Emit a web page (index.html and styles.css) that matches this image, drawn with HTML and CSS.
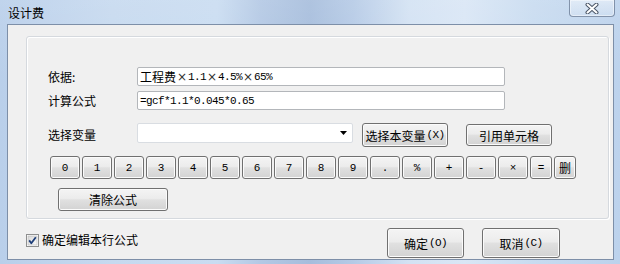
FILE: index.html
```html
<!DOCTYPE html>
<html>
<head>
<meta charset="utf-8">
<link rel="stylesheet" href="styles.css">
</head>
<body>
<div class="window">
  <div class="titlebar">
    <span class="title">设计费</span>
    <span class="close">
      <svg width="14" height="11" viewBox="0 0 14 11">
        <path d="M2.5 1.5 L11.5 9.5 M11.5 1.5 L2.5 9.5" stroke="#4a5566" stroke-width="4" stroke-linecap="round" fill="none"/>
        <path d="M2.5 1.5 L11.5 9.5 M11.5 1.5 L2.5 9.5" stroke="#ffffff" stroke-width="2" stroke-linecap="round" fill="none"/>
      </svg>
    </span>
  </div>
  <div class="client">
    <div class="group">
      <div class="row r1">
        <span class="label">依据:</span>
        <div class="field"><span class="cjk">工程费</span><span class="x">×</span><span class="mono">1.1</span><span class="x">×</span><span class="mono">4.5%</span><span class="x">×</span><span class="mono">65%</span></div>
      </div>
      <div class="row r2">
        <span class="label">计算公式</span>
        <div class="field"><span class="mono">=gcf*1.1*0.045*0.65</span></div>
      </div>
      <div class="row r3">
        <span class="label">选择变量</span>
        <div class="select">
          <svg width="7" height="4" viewBox="0 0 7 4"><path d="M0 0 H7 L3.5 4 Z" fill="#000"/></svg>
        </div>
        <button class="btn pick">选择本变量<span class="hk">(X)</span></button>
        <button class="btn cell">引用单元格</button>
      </div>
      <div class="row calc">
        <button class="btn key">0</button>
        <button class="btn key">1</button>
        <button class="btn key">2</button>
        <button class="btn key">3</button>
        <button class="btn key">4</button>
        <button class="btn key">5</button>
        <button class="btn key">6</button>
        <button class="btn key">7</button>
        <button class="btn key">8</button>
        <button class="btn key">9</button>
        <button class="btn key">.</button>
        <button class="btn key">%</button>
        <button class="btn key">+</button>
        <button class="btn key">-</button>
        <button class="btn key">×</button>
        <button class="btn key narrow">=</button>
        <button class="btn key narrow del">删</button>
      </div>
      <div class="row r5">
        <button class="btn clear">清除公式</button>
      </div>
    </div>
    <div class="footer">
      <label class="check">
        <svg width="13" height="13" viewBox="0 0 13 13">
          <defs>
            <linearGradient id="cb" x1="0" y1="0" x2="1" y2="1">
              <stop offset="0" stop-color="#d8d8d8"/>
              <stop offset="1" stop-color="#fafafa"/>
            </linearGradient>
          </defs>
          <rect x="0.5" y="0.5" width="12" height="12" fill="#fff" stroke="#8e8f8f"/>
          <rect x="2" y="2" width="9" height="9" fill="url(#cb)" stroke="#b6b6b6" stroke-width="0.6"/>
          <path d="M3.2 6.4 L5.3 9.2 L9.8 3.2" stroke="#1d3d78" stroke-width="1.8" fill="none" stroke-linejoin="round"/>
        </svg>
        <span class="check-text">确定编辑本行公式</span>
      </label>
      <button class="btn ok">确定<span class="hk">(O)</span></button>
      <button class="btn cancel">取消<span class="hk">(C)</span></button>
    </div>
  </div>
</div>
</body>
</html>
```

FILE: styles.css
```css
html, body {
  margin: 0;
  padding: 0;
}
body {
  width: 620px;
  height: 264px;
  overflow: hidden;
  font-family: "Noto Sans CJK SC", "Liberation Sans", sans-serif;
  font-size: 12px;
  color: #000;
}
.window {
  width: 620px;
  height: 264px;
  display: flex;
  flex-direction: column;
  background:
    linear-gradient(180deg, rgba(255,255,255,0.10) 0%, rgba(255,255,255,0) 30%),
    linear-gradient(90deg, #b9cfea 0%, #c6d9ef 18%, #c9dcf1 35%, #b3c8e4 42%, #a6bddc 50%, #b5cae6 57%, #d3e2f3 66%, #d9e6f5 75%, #c8dbf0 86%, #bcd2ec 100%);
}
.titlebar {
  height: 24px;
  display: flex;
  align-items: flex-start;
  padding: 0 5px 0 8px;
  box-sizing: border-box;
}
.title {
  margin-top: 5px;
  font-size: 12px;
  line-height: 16px;
  color: #000;
}
.close {
  margin-left: auto;
  width: 46px;
  height: 17px;
  box-sizing: border-box;
  border: 1px solid rgba(70, 90, 120, 0.6);
  border-top: none;
  border-radius: 0 0 4px 4px;
  background: linear-gradient(180deg, rgba(255,255,255,0.45), rgba(255,255,255,0.15));
  box-shadow: inset 0 0 0 1px rgba(255,255,255,0.45);
  display: flex;
  align-items: center;
  justify-content: center;
}
.client {
  margin: 0 6px 0 7px;
  height: 236px;
  box-sizing: border-box;
  border: 1px solid #7d8fa8;
  background: #f0f0f0;
  padding: 11px 4px 0 18px;
  display: flex;
  flex-direction: column;
}
.group {
  border: 1px solid #d5d9de;
  border-radius: 3px;
  box-shadow: inset 1px 1px 0 #ffffff, 1px 1px 0 #ffffff;
  padding: 30px 0 7px 0;
  display: flex;
  flex-direction: column;
}
.row {
  display: flex;
  align-items: center;
  padding-left: 21px;
}
.label {
  width: 89px;
  line-height: 16px;
}
.field {
  width: 368px;
  height: 19px;
  box-sizing: border-box;
  border: 1px solid #b3b6ba;
  border-radius: 2px;
  background: #fff;
  padding-left: 2px;
  display: flex;
  align-items: center;
  white-space: nowrap;
}
.cjk {
  font-size: 12px;
}
.x {
  display: inline-block;
  width: 12px;
  text-align: center;
  font-family: "DejaVu Sans", sans-serif;
  font-size: 12px;
  color: #333;
}
.mono {
  font-family: "Liberation Mono", monospace;
  font-size: 11px;
  letter-spacing: -0.6px;
}
.r2 {
  margin-top: 5px;
}
.r3 {
  margin-top: 13px;
  align-items: flex-start;
}
.r3 .label {
  align-self: center;
}
.select {
  width: 216px;
  height: 20px;
  box-sizing: border-box;
  border: 1px solid #d9dde2;
  border-radius: 2px;
  background: #fff;
  display: flex;
  align-items: center;
  justify-content: flex-end;
  padding-right: 5px;
}
.btn {
  margin: 0;
  padding: 0;
  box-sizing: border-box;
  border: 1px solid #707070;
  border-radius: 3px;
  background: linear-gradient(180deg, #f4f4f4 0%, #ececec 45%, #e0e0e0 52%, #d3d3d3 100%);
  box-shadow: inset 0 0 0 1px #fbfbfb;
  font-family: "Noto Sans CJK SC", "Liberation Sans", sans-serif;
  font-size: 12px;
  color: #000;
  white-space: nowrap;
  display: flex;
  align-items: center;
  justify-content: center;
}
.hk {
  font-family: "Liberation Mono", monospace;
  font-size: 11px;
  letter-spacing: -0.6px;
  margin-left: 1px;
}
.pick {
  margin-left: 9px;
  width: 86px;
  height: 24px;
}
.cell {
  margin-left: 18px;
  margin-top: 1px;
  width: 86px;
  height: 22px;
}
.calc {
  margin-top: 9px;
  padding-left: 23px;
  gap: 2px;
}
.key {
  width: 30px;
  height: 23px;
  font-family: "Liberation Mono", monospace;
  font-size: 11px;
}
.key.narrow {
  width: 22px;
}
.key.del {
  font-family: "Noto Sans CJK SC", sans-serif;
  font-size: 12px;
}
.r5 {
  margin-top: 9px;
  padding-left: 31px;
}
.clear {
  width: 110px;
  height: 23px;
}
.footer {
  margin-top: 9px;
  display: flex;
  align-items: flex-start;
}
.check {
  margin-top: 5px;
  display: flex;
  align-items: center;
  gap: 3px;
}
.check svg {
  display: block;
}
.check-text {
  line-height: 14px;
}
.ok {
  margin-left: auto;
  width: 77px;
  height: 30px;
}
.cancel {
  margin-left: 18px;
  margin-right: 49px;
  width: 78px;
  height: 30px;
}
```
